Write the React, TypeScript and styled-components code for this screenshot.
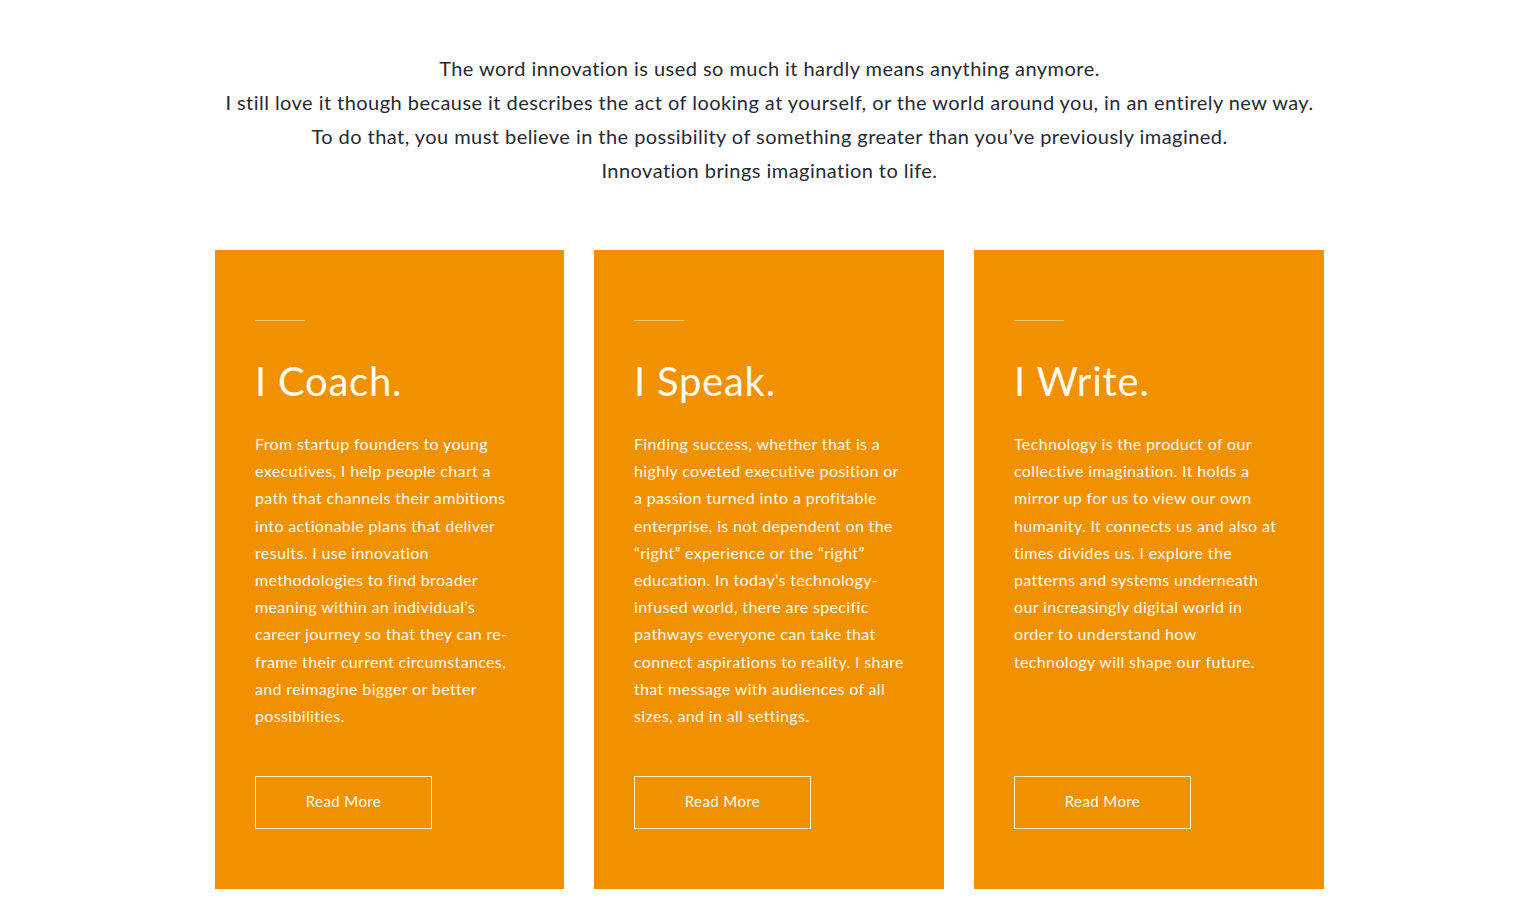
import React from "react";
import styled, { createGlobalStyle } from "styled-components";

const Global = createGlobalStyle`
  html, body { margin: 0; padding: 0; background: #ffffff; }
  body { font-family: Lato, "Open Sans", "Liberation Sans", sans-serif; -webkit-font-smoothing: antialiased; }
`;

const Page = styled.main`
  width: 1532px;
  display: flex;
  flex-direction: column;
  align-items: center;
  padding-top: 51px;
  box-sizing: border-box;
`;

const Intro = styled.div`
  display: flex;
  flex-direction: column;
  align-items: center;
  color: #262a33;
  font-size: 20px;
  line-height: 34px;
  font-weight: 400;
  letter-spacing: 0.45px;
  text-align: center;
  margin-left: 7px;
`;

const IntroLine = styled.p`
  margin: 0;
  white-space: nowrap;
`;

const Cards = styled.section`
  margin-top: 63px;
  display: grid;
  grid-template-columns: 349px 350px 350px;
  column-gap: 30px;
  margin-left: 7px;
`;

const Card = styled.article`
  background: #f29100;
  padding: 70px 40px 60px;
  display: flex;
  flex-direction: column;
  align-items: flex-start;
  color: #fffaf0;
`;

const Rule = styled.div`
  width: 50px;
  height: 1px;
  background: #f8c667;
`;

const Title = styled.h2`
  margin: 36px 0 0;
  font-size: 40px;
  line-height: 48px;
  font-weight: 400;
  letter-spacing: 0.75px;
  color: #fffcf2;
  white-space: nowrap;
`;

const Body = styled.p`
  margin: 25px 0 0;
  font-size: 16px;
  line-height: 27.2px;
  font-weight: 400;
  letter-spacing: 0.35px;
  white-space: nowrap;
`;

const Button = styled.a`
  margin-top: auto;
  width: 177px;
  height: 53px;
  box-sizing: border-box;
  border: 1px solid #fff3cf;
  display: flex;
  align-items: center;
  justify-content: center;
  padding-bottom: 3px;
  font-size: 15px;
  letter-spacing: 0.4px;
  color: #fffaf0;
  text-decoration: none;
  cursor: pointer;
`;

const Spacer = styled.div`
  height: 47px;
  flex: none;
`;

const cards = [
  {
    title: "I Coach.",
    lines: [
      "From startup founders to young",
      "executives, I help people chart a",
      "path that channels their ambitions",
      "into actionable plans that deliver",
      "results. I use innovation",
      "methodologies to find broader",
      "meaning within an individual’s",
      "career journey so that they can re-",
      "frame their current circumstances,",
      "and reimagine bigger or better",
      "possibilities.",
    ],
  },
  {
    title: "I Speak.",
    lines: [
      "Finding success, whether that is a",
      "highly coveted executive position or",
      "a passion turned into a profitable",
      "enterprise, is not dependent on the",
      "“right” experience or the “right”",
      "education. In today’s technology-",
      "infused world, there are specific",
      "pathways everyone can take that",
      "connect aspirations to reality. I share",
      "that message with audiences of all",
      "sizes, and in all settings.",
    ],
  },
  {
    title: "I Write.",
    lines: [
      "Technology is the product of our",
      "collective imagination. It holds a",
      "mirror up for us to view our own",
      "humanity. It connects us and also at",
      "times divides us. I explore the",
      "patterns and systems underneath",
      "our increasingly digital world in",
      "order to understand how",
      "technology will shape our future.",
    ],
  },
];

export default function App() {
  return (
    <>
      <Global />
      <Page>
        <Intro>
          <IntroLine>The word innovation is used so much it hardly means anything anymore.</IntroLine>
          <IntroLine>I still love it though because it describes the act of looking at yourself, or the world around you, in an entirely new way.</IntroLine>
          <IntroLine>To do that, you must believe in the possibility of something greater than you’ve previously imagined.</IntroLine>
          <IntroLine>Innovation brings imagination to life.</IntroLine>
        </Intro>
        <Cards>
          {cards.map((c) => (
            <Card key={c.title}>
              <Rule />
              <Title>{c.title}</Title>
              <Body>
                {c.lines.map((l, i) => (
                  <React.Fragment key={i}>
                    {l}
                    {i < c.lines.length - 1 && <br />}
                  </React.Fragment>
                ))}
              </Body>
              <Spacer />
              <Button href="#">Read More</Button>
            </Card>
          ))}
        </Cards>
      </Page>
    </>
  );
}
